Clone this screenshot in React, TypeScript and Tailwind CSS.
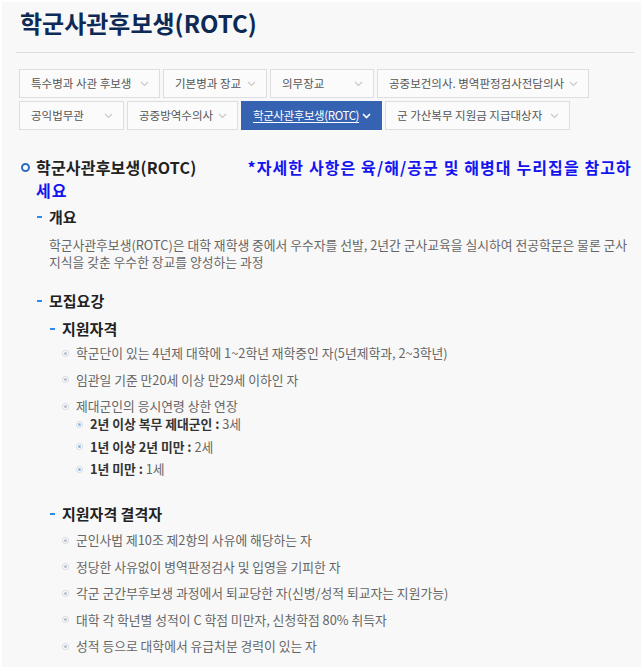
import React from "react";

const font = { fontFamily: '"Noto Sans CJK KR", "Noto Sans", sans-serif' };

function Chevron({ active }: { active?: boolean }) {
  return (
    <svg width="9" height="6" viewBox="0 0 9 6" className="shrink-0">
      <path
        d="M1 1 L4.5 4.5 L8 1"
        fill="none"
        stroke={active ? "#ffffff" : "#c8c8c8"}
        strokeWidth={active ? 1.6 : 1.1}
      />
    </svg>
  );
}

function Tab({ label, w, active }: { label: string; w: string; active?: boolean }) {
  return (
    <div
      className={`${w} h-[29px] flex items-center justify-between pl-[11px] pr-[10px] border text-[11.5px] whitespace-nowrap ${
        active
          ? "bg-[#3562b1] border-[#3562b1] text-white"
          : "bg-[#fbfbfb] border-[#dedede] text-[#555]"
      }`}
    >
      <span className={active ? "underline underline-offset-2 tracking-[-0.4px]" : ""}>{label}</span>
      <Chevron active={active} />
    </div>
  );
}

function Dot({ sub }: { sub?: boolean }) {
  return (
    <span className="inline-flex w-[7px] h-[7px] rounded-full border border-[#cfd6e0] items-center justify-center mr-[7px] shrink-0 bg-white">
      <span className={`w-[3px] h-[3px] rounded-full ${sub ? "bg-[#8fb4e0]" : "bg-[#b5bcc6]"}`} />
    </span>
  );
}

function Item({ children, first }: { children: React.ReactNode; first?: boolean }) {
  return (
    <li className={`flex items-center leading-[18px] ${first ? "mt-[6px]" : "mt-[8.5px]"}`}>
      <Dot />
      <span>{children}</span>
    </li>
  );
}

function SubItem({ children, first }: { children: React.ReactNode; first?: boolean }) {
  return (
    <li className={`flex items-center leading-[18px] ${first ? "mt-0" : "mt-[4.5px]"}`}>
      <Dot sub />
      <span>{children}</span>
    </li>
  );
}

function Heading({ children, className = "" }: { children: React.ReactNode; className?: string }) {
  return (
    <h3 className={`flex items-center text-[15px] font-bold text-[#222] leading-[22px] ${className}`}>
      <span className="inline-block w-[5px] h-[2px] bg-[#2a8cf0] mr-[7px]" />
      {children}
    </h3>
  );
}

export default function App() {
  return (
    <div className="w-[643px] h-[669px] bg-white p-[2px] overflow-hidden" style={font}>
      <div className="w-full h-full bg-[#f8f8f8] pl-[14px] pr-[7px] pt-[6px]">
        <h1 className="text-[24px] font-bold text-[#0d2a57] leading-[30px] pl-[4px]">학군사관후보생(ROTC)</h1>
        <div className="h-px bg-[#d9dce2] mt-[14px] mb-[16px]" />

        <div className="flex flex-wrap gap-x-[3px] gap-y-[3px] pl-[3px]">
          <Tab label="특수병과 사관 후보생" w="w-[141px]" />
          <Tab label="기본병과 장교" w="w-[104px]" />
          <Tab label="의무장교" w="w-[104px]" />
          <Tab label="공중보건의사. 병역판정검사전담의사" w="w-[212px]" />
          <Tab label="공익법무관" w="w-[105px]" />
          <Tab label="공중방역수의사" w="w-[111px]" />
          <Tab label="학군사관후보생(ROTC)" w="w-[141px]" active />
          <Tab label="군 가산복무 지원금 지급대상자" w="w-[185px]" />
        </div>

        <div className="mt-[26px] relative pl-[20px] text-[16px] font-bold leading-[23px]">
          <span className="absolute left-[5px] top-[7px] w-[9px] h-[9px] rounded-full border-[2.5px] border-[#2f6cc0] bg-white" />
          <span className="text-[#222] tracking-[0.2px]">학군사관후보생(ROTC)</span>
          <span className="ml-[51px] text-[#1414f0] tracking-[1.1px]">*자세한 사항은 육/해/공군 및 해병대 누리집을 참고하세요</span>
        </div>

        <div className="pl-[21px] mt-[4px]">
          <Heading>개요</Heading>
          <p className="pl-[12px] mt-[8px] text-[12.8px] leading-[17px] text-[#666]">
            학군사관후보생(ROTC)은 대학 재학생 중에서 우수자를 선발, 2년간 군사교육을 실시하여 전공학문은 물론 군사
            지식을 갖춘 우수한 장교를 양성하는 과정
          </p>

          <Heading className="mt-[20px]">모집요강</Heading>
          <div className="pl-[13px] mt-[6px]">
            <Heading>지원자격</Heading>
            <ul className="pl-[12px] text-[12.8px] text-[#666]">
              <li className="flex items-center mt-[4px] leading-[18px]">
                <Dot />
                <span>학군단이 있는 4년제 대학에 1~2학년 재학중인 자(5년제학과, 2~3학년)</span>
              </li>
              <Item>임관일 기준 만20세 이상 만29세 이하인 자</Item>
              <li className="mt-[8.5px] leading-[18px]">
                <div className="flex items-center">
                  <Dot />
                  <span>제대군인의 응시연령 상한 연장</span>
                </div>
                <ul className="pl-[14px]">
                  <SubItem first>
                    <b className="text-[#333]">2년 이상 복무 제대군인 :</b> 3세
                  </SubItem>
                  <SubItem>
                    <b className="text-[#333]">1년 이상 2년 미만 :</b> 2세
                  </SubItem>
                  <SubItem>
                    <b className="text-[#333]">1년 미만 :</b> 1세
                  </SubItem>
                </ul>
              </li>
            </ul>

            <Heading className="mt-[25px]">지원자격 결격자</Heading>
            <ul className="pl-[12px] text-[12.8px] text-[#666]">
              <Item first>군인사법 제10조 제2항의 사유에 해당하는 자</Item>
              <Item>정당한 사유없이 병역판정검사 및 입영을 기피한 자</Item>
              <Item>각군 군간부후보생 과정에서 퇴교당한 자(신병/성적 퇴교자는 지원가능)</Item>
              <Item>대학 각 학년별 성적이 C 학점 미만자, 신청학점 80% 취득자</Item>
              <Item>성적 등으로 대학에서 유급처분 경력이 있는 자</Item>
            </ul>
          </div>
        </div>
      </div>
    </div>
  );
}
